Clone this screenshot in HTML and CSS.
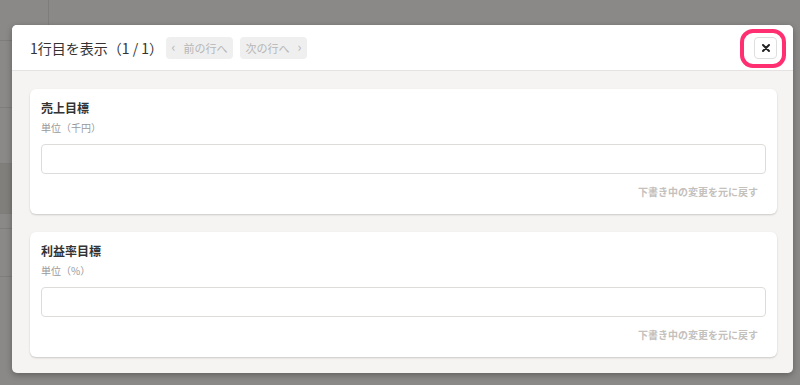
FILE: index.html
```html
<!DOCTYPE html>
<html lang="ja">
<head>
  <meta charset="utf-8">
  <title>1行目を表示</title>
  <link rel="stylesheet" href="styles.css">
</head>
<body>
  <div class="page">
    <div class="page-head"></div>
    <div class="page-row r1"></div>
    <div class="page-row r2"></div>
    <div class="page-row r3 dark"></div>
    <div class="page-row r4"></div>
    <div class="page-row r5"></div>
    <div class="page-row r6"></div>
  </div>

  <div class="modal">
    <div class="modal-header">
      <h1 class="modal-title">1行目を表示（1 / 1）</h1>
      <div class="pager">
        <button class="pager-btn" disabled><span class="chev">‹</span>前の行へ</button>
        <button class="pager-btn" disabled>次の行へ<span class="chev">›</span></button>
      </div>
      <button class="close-btn" aria-label="閉じる">
        <svg width="10" height="10" viewBox="0 0 10 10"><path d="M2 2 L8 8 M8 2 L2 8" stroke="#222" stroke-width="2" stroke-linecap="round"/></svg>
      </button>
    </div>

    <div class="modal-body">
      <div class="field-card">
        <div class="field-title">売上目標</div>
        <div class="field-unit">単位（千円）</div>
        <input class="field-input" type="text">
        <div class="field-reset">下書き中の変更を元に戻す</div>
      </div>
      <div class="field-card">
        <div class="field-title">利益率目標</div>
        <div class="field-unit">単位（%）</div>
        <input class="field-input" type="text">
        <div class="field-reset">下書き中の変更を元に戻す</div>
      </div>
    </div>
  </div>
</body>
</html>
```

FILE: styles.css
```css
html, body {
  margin: 0;
  height: 100%;
}

body {
  background: #8a8987;
  font-family: "Noto Sans CJK JP", "Noto Sans", sans-serif;
  color: #333;
  overflow: hidden;
  position: relative;
}

.page {
  width: 49px;
}

.page-head {
  height: 40px;
  border-right: 1px solid #7e7d7b;
}

.page-row {
  border-top: 1px solid #7e7d7b;
}

.r1 { height: 66px; }
.r2 { height: 55px; }
.r3 { height: 49px; }
.r4 { height: 14px; }
.r5 { height: 47px; }
.r6 { height: 56px; }

.page-row.dark {
  background: #807f7c;
}

.modal {
  position: absolute;
  top: 25px;
  left: 12px;
  width: 781px;
  height: 348px;
  background: #f5f4f2;
  border-radius: 5px;
  box-shadow: 0 2px 6px rgba(0, 0, 0, 0.3);
  overflow: hidden;
}

.modal-header {
  display: flex;
  align-items: center;
  height: 46px;
  padding: 0 16px 0 18px;
  background: #fff;
  border-bottom: 1px solid #e4e3e1;
  box-sizing: border-box;
}

.modal-title {
  margin: 0;
  font-size: 14px;
  font-weight: 400;
  color: #333;
}

.pager {
  display: flex;
  gap: 7px;
  margin-left: 3px;
}

.pager-btn {
  display: flex;
  align-items: center;
  justify-content: center;
  gap: 8px;
  width: 67px;
  height: 22px;
  padding: 0;
  border: 0;
  border-radius: 4px;
  background: #efefef;
  color: #b6b6b6;
  font-family: inherit;
  font-size: 11px;
}

.chev {
  font-size: 13px;
  line-height: 1;
  margin-top: -2px;
}

.close-btn {
  position: relative;
  margin-left: auto;
  width: 23px;
  height: 22px;
  padding: 0;
  display: flex;
  align-items: center;
  justify-content: center;
  background: #fff;
  border: 1px solid #dedede;
  border-radius: 4px;
}

.close-btn::after {
  content: "";
  position: absolute;
  top: -9px;
  bottom: -10px;
  left: -15px;
  right: -10px;
  border: 4px solid #ff2f72;
  border-radius: 13px;
}

.modal-body {
  display: flex;
  flex-direction: column;
  gap: 18px;
  padding: 18px 16px 16px 18px;
}

.field-card {
  display: flex;
  flex-direction: column;
  padding: 11px 11px 15px;
  background: #fff;
  border-radius: 6px;
  box-shadow: 0 1px 2px rgba(0, 0, 0, 0.18);
}

.field-title {
  font-size: 12px;
  font-weight: 700;
  line-height: 16px;
  color: #333;
}

.field-unit {
  margin-top: 5px;
  font-size: 10px;
  line-height: 14px;
  color: #999;
}

.field-input {
  margin-top: 9px;
  height: 30px;
  box-sizing: border-box;
  border: 1px solid #dddcda;
  border-radius: 4px;
  background: #fff;
}

.field-reset {
  margin-top: 11px;
  margin-right: 8px;
  align-self: flex-end;
  font-size: 10px;
  line-height: 14px;
  font-weight: 700;
  color: #c4c0bc;
}
```
